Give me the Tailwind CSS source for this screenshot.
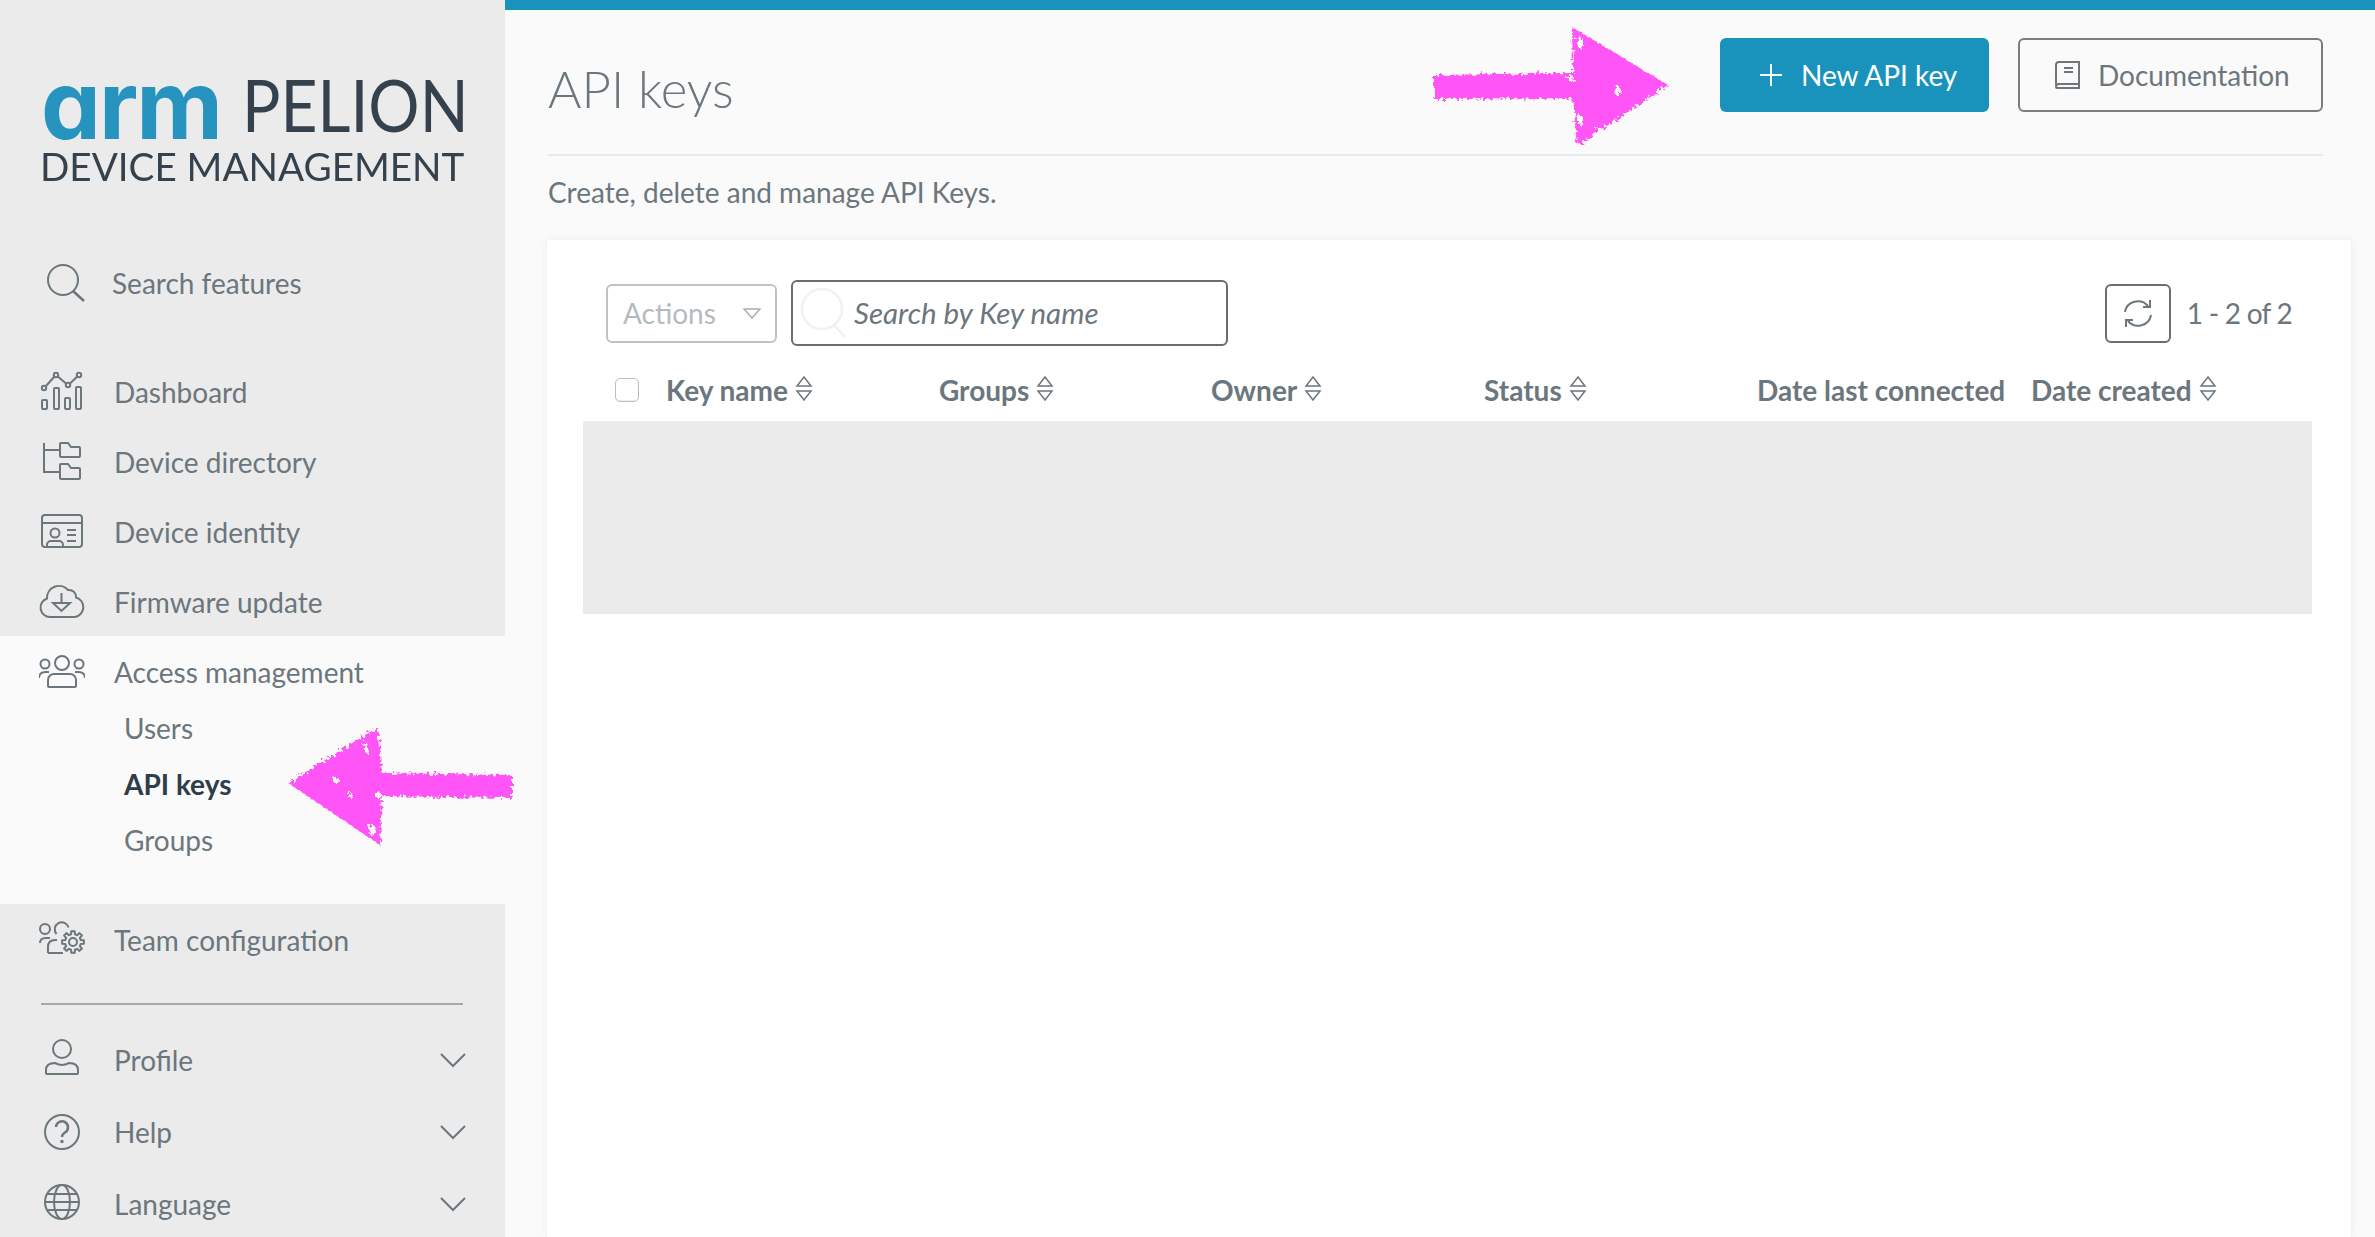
<!DOCTYPE html>
<html lang="en">
<head>
    <meta charset="UTF-8">
    <title>API keys - Arm Pelion Device Management</title>
    <script src="https://cdn.jsdelivr.net/npm/@tailwindcss/browser@4"></script>
</head>
<body class="relative flex h-[1237px] w-[2375px] overflow-hidden bg-[#fafafa] font-[Lato,sans-serif] text-[28px] text-[#6b767d]">
    <!-- SIDEBAR -->
    <aside class="h-full w-[505px] shrink-0 overflow-hidden bg-[#ebebeb]">
        <div class="h-[248px] pl-[43px] pt-[58px]">
            <div class="flex h-[92px] items-center">
                <span class="-ml-[2px] w-[201px] font-[Inter,sans-serif] text-[95px] leading-none font-bold tracking-[-2px] text-[#2794c0] [font-feature-settings:'cv11']">arm</span>
                <span class="origin-left scale-x-[0.89] text-[72px] leading-none font-normal text-[#35424d]">PELION</span>
            </div>
            <div class="-ml-[3px] -mt-[6px] origin-left scale-x-[0.99] whitespace-nowrap text-[39px] leading-[44px] text-[#35424d]">DEVICE MANAGEMENT</div>
        </div>
        <div class="flex h-[70px] items-center pl-[46px]">
            <svg class="mr-[25px] shrink-0" width="41" height="41" viewBox="0 0 41 41" fill="none" stroke="#6b767d" stroke-width="2"><circle cx="17" cy="17" r="15"/><path d="M27 28l11 10" stroke-width="2.5"/></svg>
            <span>Search features</span>
        </div>
        <nav class="mt-[39px]">
            <a href="#" class="flex h-[70px] items-center pl-[39px]">
                <svg class="mr-[29px] shrink-0" width="46" height="46" viewBox="0 0 46 46" fill="none" stroke="#6b767d" stroke-width="2"><rect x="3" y="31" width="5" height="9" rx="1"/><rect x="15" y="19" width="5" height="21" rx="1"/><rect x="26" y="29" width="5" height="11" rx="1"/><rect x="37" y="18" width="5" height="22" rx="1"/><circle cx="5" cy="19" r="2.2"/><circle cx="17" cy="6" r="2.2"/><circle cx="29" cy="16" r="2.2"/><circle cx="40" cy="6" r="2.2"/><path d="M6.5 17.5L15.500 7.500M18.800 7.500L27 14.500M31 14.500L38.200 7.500"/></svg>
                <span>Dashboard</span>
            </a>
            <a href="#" class="flex h-[70px] items-center pl-[39px]">
                <svg class="mr-[29px] shrink-0" width="46" height="46" viewBox="0 0 46 46" fill="none" stroke="#6b767d" stroke-width="2"><path d="M5 4v29h16M5 11h16"/><path d="M21 16V5a1 1 0 0 1 1-1h7l3 4h8a1 1 0 0 1 1 1v8a1 1 0 0 1-1 1H22a1 1 0 0 1-1-1z"/><path d="M21 39V26a1 1 0 0 1 1-1h7l3 4h8a1 1 0 0 1 1 1v9a1 1 0 0 1-1 1H22a1 1 0 0 1-1-1z"/></svg>
                <span>Device directory</span>
            </a>
            <a href="#" class="flex h-[70px] items-center pl-[39px]">
                <svg class="mr-[29px] shrink-0" width="46" height="46" viewBox="0 0 46 46" fill="none" stroke="#6b767d" stroke-width="2"><rect x="3" y="6" width="40" height="32" rx="3"/><path d="M3 14h40"/><circle cx="16" cy="24" r="4.500"/><path d="M8 38v-2a4 4 0 0 1 4-4h8a4 4 0 0 1 4 4v2M28 21h9M28 26h9M28 32h9"/></svg>
                <span>Device identity</span>
            </a>
            <a href="#" class="flex h-[69px] items-center pl-[39px]">
                <svg class="mr-[29px] shrink-0" width="46" height="46" viewBox="0 0 46 46" fill="none" stroke="#6b767d" stroke-width="2"><path d="M11 38A9.500 9.500 0 0 1 8 19.500 12 12 0 0 1 29 11 7 7 0 0 1 37 18.500 10 10 0 0 1 36 38Z"/><path d="M22.500 14v10M14 24h17l-8.500 8z"/></svg>
                <span>Firmware update</span>
            </a>
        </nav>
        <!-- active section -->
        <div class="h-[268px] bg-[#fafafa] pt-[1px]">
            <a href="#" class="flex h-[70px] items-center pl-[39px]">
                <svg class="mr-[29px] shrink-0" width="46" height="46" viewBox="0 0 46 46" fill="none" stroke="#6b767d" stroke-width="2"><circle cx="23" cy="14" r="7"/><circle cx="6" cy="15" r="4.500"/><circle cx="40" cy="15" r="4.500"/><path d="M9 37v-6a6 6 0 0 1 6-6h16a6 6 0 0 1 6 6v6a1 1 0 0 1-1 1H10a1 1 0 0 1-1-1z"/><path d="M0 29c0-4 3-6 7-6h3M46 29c0-4-3-6-7-6h-3"/></svg>
                <span>Access management</span>
            </a>
            <a href="#" class="-mt-[7px] flex h-[56px] items-center pl-[124px]">Users</a>
            <a href="#" class="flex h-[56px] items-center pl-[124px] font-bold text-[#2f3d4a]">API keys</a>
            <a href="#" class="flex h-[56px] items-center pl-[124px]">Groups</a>
        </div>
        <a href="#" class="flex h-[72px] items-center pl-[39px]">
            <svg class="mr-[29px] shrink-0 overflow-visible" width="46" height="46" viewBox="0 0 46 46" fill="none" stroke="#6b767d" stroke-width="2"><circle cx="6" cy="12" r="5"/><path d="M1 26c0-3 2-5 6-5h4M17.500 17A7 7 0 1 1 29.500 10.500M9 36v-6c0-5 3-7 7-7h2M9 36h15"/><g transform="translate(34 25)" stroke-linejoin="round"><circle r="4"/><path d="M-1.940-7.760L-1.720-10.860 1.720-10.860 1.940-7.760 4.120-6.860 6.470-8.900 8.900-6.470 6.860-4.120 7.760-1.940 10.860-1.720 10.860 1.720 7.760 1.940 6.860 4.120 8.900 6.470 6.470 8.900 4.120 6.860 1.940 7.760 1.720 10.860-1.720 10.860-1.940 7.760-4.120 6.860-6.470 8.900-8.900 6.470-6.860 4.120-7.760 1.940-10.860 1.720-10.860-1.720-7.760-1.940-6.860-4.120-8.900-6.470-6.470-8.900-4.120-6.860Z"/></g></svg>
            <span>Team configuration</span>
        </a>
        <div class="mx-[41px] mt-[27px] h-[2px] w-[422px] bg-[#a3aaad]"></div>
        <a href="#" class="mt-[19px] flex h-[72px] items-center pl-[39px]">
            <svg class="mr-[29px] shrink-0" width="46" height="46" viewBox="0 0 46 46" fill="none" stroke="#6b767d" stroke-width="2"><circle cx="23" cy="12" r="9"/><path d="M7 36v-3c0-6 5-7 9-7 2 1 4 2 7 2s5-1 7-2c4 0 9 1 9 7v3a1 1 0 0 1-1 1H8a1 1 0 0 1-1-1z"/></svg>
            <span class="flex-1">Profile</span>
            <svg class="mr-[39px]" width="26" height="15" viewBox="0 0 26 15" fill="none" stroke="#6b767d" stroke-width="2"><path d="M1 1l12 12L25 1"/></svg>
        </a>
        <a href="#" class="flex h-[72px] items-center pl-[39px]">
            <svg class="mr-[29px] shrink-0" width="46" height="46" viewBox="0 0 46 46" fill="none" stroke="#6b767d" stroke-width="2"><circle cx="23" cy="23" r="17"/><path d="M17 18a6 6 0 1 1 9 5.500c-2 1.200-3 2-3 4.500" stroke-width="2.500"/><circle cx="23" cy="32.500" r="1.700" fill="#6b767d" stroke="none"/></svg>
            <span class="flex-1">Help</span>
            <svg class="mr-[39px]" width="26" height="15" viewBox="0 0 26 15" fill="none" stroke="#6b767d" stroke-width="2"><path d="M1 1l12 12L25 1"/></svg>
        </a>
        <a href="#" class="flex h-[72px] items-center pl-[39px]">
            <svg class="mr-[29px] shrink-0" width="46" height="46" viewBox="0 0 46 46" fill="none" stroke="#6b767d" stroke-width="2"><circle cx="23" cy="21" r="17"/><ellipse cx="23" cy="21" rx="8" ry="17"/><path d="M6 21h34M8 13h30M8 29h30"/></svg>
            <span class="flex-1">Language</span>
            <svg class="mr-[39px]" width="26" height="15" viewBox="0 0 26 15" fill="none" stroke="#6b767d" stroke-width="2"><path d="M1 1l12 12L25 1"/></svg>
        </a>
    </aside>

    <!-- MAIN -->
    <main class="flex h-full flex-1 flex-col">
        <div class="h-[10px] bg-[#1a93bc]"></div>
        <div class="ml-[43px] mr-[52px]">
            <header class="flex h-[146px] items-start justify-between border-b-2 border-[#e6eaea]">
                <h1 class="mt-[49px] text-[51px] leading-[60px] font-light">API keys</h1>
                <div class="mt-[28px] flex gap-[29px]">
                    <button class="flex h-[74px] w-[269px] items-center rounded-[6px] bg-[#1a93bc] pl-[40px] text-white">
                        <svg class="mr-[19px]" width="22" height="22" viewBox="0 0 22 22" fill="none" stroke="#fff" stroke-width="2"><path d="M11 0v22M0 11h22"/></svg>
                        New API key
                    </button>
                    <button class="flex h-[74px] w-[305px] items-center rounded-[6px] border-2 border-[#777d81] pl-[35px] text-[#6f767b]">
                        <svg class="mr-[18px]" width="25" height="28" viewBox="0 0 25 28" fill="none" stroke="#6f767b" stroke-width="2"><path d="M1 24V4a3 3 0 0 1 3-3h20v22H4a3 3 0 0 0-3 3 1 1 0 0 0 1 1h22v-4"/><path d="M9 7h9M9 11h9" /></svg>
                        Documentation
                    </button>
                </div>
            </header>
            <p class="mt-[17px] leading-[38px]">Create, delete and manage API Keys.</p>
        </div>

        <!-- TABLE CARD -->
        <section class="ml-[42px] mr-[24px] mt-[29px] flex-1 bg-white pt-[40px] shadow-[0_0_8px_rgba(0,0,0,0.06)]">
            <div class="flex items-center pl-[59px] pr-[59px]">
                <div class="flex h-[59px] w-[171px] items-center justify-between rounded-[6px] border-2 border-[#bcc2c5] pl-[15px] pr-[14px] text-[#b4bbbf]">
                    Actions
                    <svg width="18" height="11" viewBox="0 0 18 11" fill="none" stroke="#a9b0b4" stroke-width="1.500"><path d="M1 1h16l-8 9z"/></svg>
                </div>
                <div class="ml-[14px] flex h-[66px] w-[437px] items-center rounded-[6px] border-2 border-[#666f75] pl-[7px] text-[29.5px] italic">
                    <svg class="mr-[6px] shrink-0" width="48" height="50" viewBox="0 0 48 50" fill="none" stroke="#eef2f2" stroke-width="2.500"><circle cx="22" cy="21" r="20"/><path d="M34 37l11 12"/></svg>
                    Search by Key name
                </div>
                <div class="ml-auto flex h-[59px] w-[66px] items-center justify-center rounded-[6px] border-2 border-[#666f75]">
                    <svg width="30" height="29" viewBox="0 0 30 29" fill="none" stroke="#6b767d" stroke-width="2"><path d="M2 13A13 12.500 0 0 1 25 7M28 16A13 12.500 0 0 1 5 22"/><path d="M27 1v7h-7M3 28v-7h7"/></svg>
                </div>
                <span class="ml-[16px] tracking-[-0.75px]">1 - 2 of 2</span>
            </div>
            <div class="flex h-[75px] items-center pl-[68px] pt-[13px] font-bold">
                <span class="mr-[27px] h-[24px] w-[24px] shrink-0 rounded-[5px] border border-[#b9bfc2] shadow-[inset_0_-1px_1px_rgba(0,0,0,0.08)]"></span>
                <div class="flex w-[273px] items-center gap-[7px]">Key name
                    <svg class="-mt-[4px]" width="18" height="25" viewBox="0 0 18 25" fill="none" stroke="#6b767d" stroke-width="1.500"><path d="M9 1l7 9H2zM9 24l7-9H2z"/></svg>
                </div>
                <div class="flex w-[272px] items-center gap-[7px]">Groups
                    <svg class="-mt-[4px]" width="18" height="25" viewBox="0 0 18 25" fill="none" stroke="#6b767d" stroke-width="1.500"><path d="M9 1l7 9H2zM9 24l7-9H2z"/></svg>
                </div>
                <div class="flex w-[273px] items-center gap-[7px]">Owner
                    <svg class="-mt-[4px]" width="18" height="25" viewBox="0 0 18 25" fill="none" stroke="#6b767d" stroke-width="1.500"><path d="M9 1l7 9H2zM9 24l7-9H2z"/></svg>
                </div>
                <div class="flex w-[273px] items-center gap-[7px]">Status
                    <svg class="-mt-[4px]" width="18" height="25" viewBox="0 0 18 25" fill="none" stroke="#6b767d" stroke-width="1.500"><path d="M9 1l7 9H2zM9 24l7-9H2z"/></svg>
                </div>
                <div class="w-[274px]">Date last connected</div>
                <div class="flex items-center gap-[7px]">Date created
                    <svg class="-mt-[4px]" width="18" height="25" viewBox="0 0 18 25" fill="none" stroke="#6b767d" stroke-width="1.500"><path d="M9 1l7 9H2zM9 24l7-9H2z"/></svg>
                </div>
            </div>
            <div class="ml-[36px] mr-[39px] h-[193px] bg-[#ebebeb]"></div>
        </section>
    </main>

    <!-- hand drawn arrows on top of the screenshot -->
    <svg class="absolute left-0 top-0" width="2375" height="1237" fill="#ff55f6">
        <defs>
            <filter id="rough" x="-10%" y="-10%" width="120%" height="120%">
                <feTurbulence type="fractalNoise" baseFrequency="0.3" numOctaves="2" seed="4"/>
                <feDisplacementMap in="SourceGraphic" scale="9"/>
            </filter>
        </defs>
        <g filter="url(#rough)">
            <path d="M288 783L378 727L382 773L512 775V798L382 796L380 845Z"/>
            <path d="M1668 85L1572 27L1573 73L1434 75V99L1573 98L1577 146Z"/>
            <g fill="#fafafa">
                <ellipse cx="366" cy="748" rx="2" ry="5"/>
                <ellipse cx="336" cy="780" rx="3" ry="3"/>
                <ellipse cx="372" cy="830" rx="3" ry="6"/>
                <ellipse cx="378" cy="795" rx="4" ry="2"/>
                <ellipse cx="350" cy="795" rx="3" ry="2"/>
                <ellipse cx="1580" cy="42" rx="3" ry="6"/>
                <ellipse cx="1617" cy="90" rx="3" ry="5"/>
                <ellipse cx="1580" cy="120" rx="3" ry="5"/>
                <ellipse cx="1600" cy="130" rx="3" ry="2"/>
                <ellipse cx="1570" cy="78" rx="4" ry="2"/>
            </g>
        </g>
    </svg>
</body>
</html>
